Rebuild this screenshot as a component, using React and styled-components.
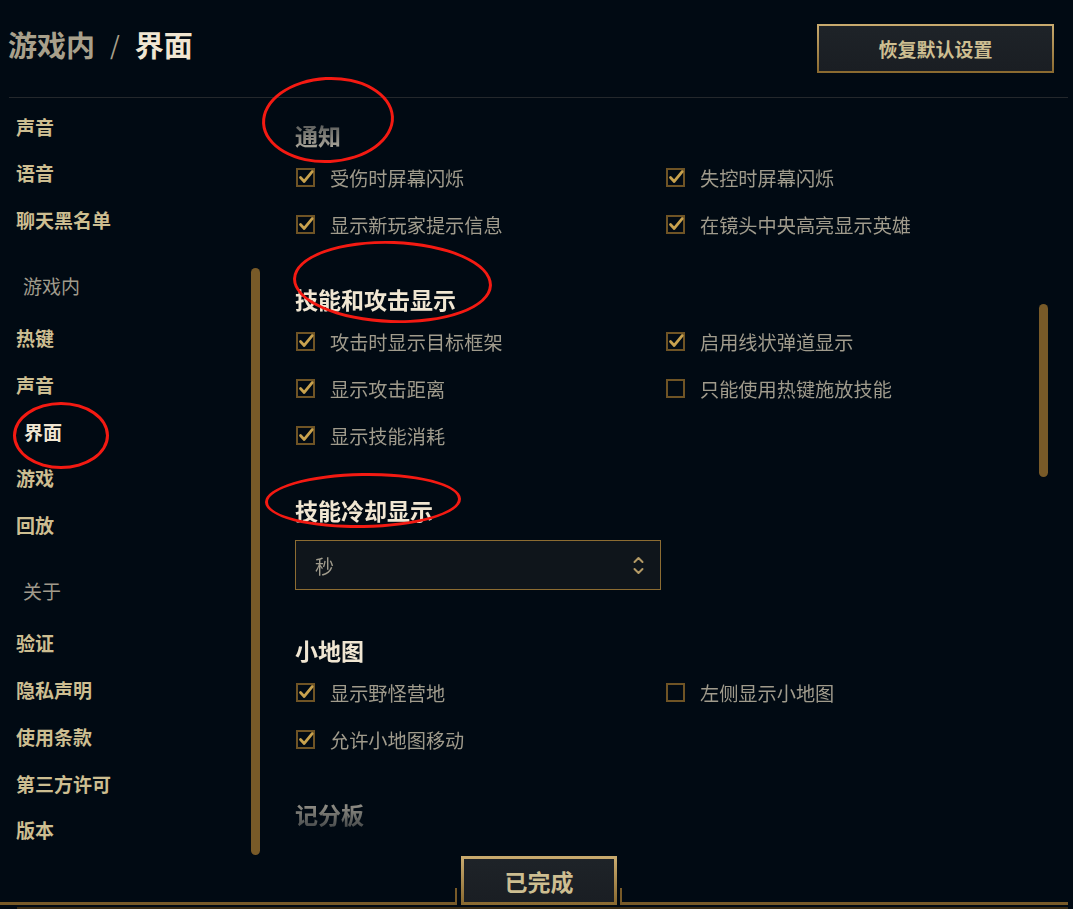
import React from "react";
import styled, { createGlobalStyle } from "styled-components";

const GlobalStyle = createGlobalStyle`
  html, body {
    margin: 0;
    padding: 0;
    background: #010a13;
  }
  body {
    font-family: "Noto Sans CJK SC", "Noto Sans", sans-serif;
  }
`;

const Page = styled.div`
  position: relative;
  display: flex;
  flex-direction: column;
  width: 1073px;
  height: 909px;
  overflow: hidden;
  background: #010a13;
`;

const Header = styled.div`
  display: flex;
  justify-content: space-between;
  align-items: center;
  height: 97px;
  padding: 0 19px 0 8px;
  box-sizing: border-box;
`;

const Title = styled.div`
  display: flex;
  align-items: center;
  padding-bottom: 10px;
  font-size: 29px;
  line-height: 36px;
  font-weight: 700;
  color: #a8a08b;
`;

const Slash = styled.span`
  margin: 0 15px;
  font-weight: 400;
  font-size: 25px;
`;

const Current = styled.span`
  color: #f0e6d2;
`;

const GoldButton = styled.button`
  display: flex;
  align-items: center;
  justify-content: center;
  width: ${({ $w }) => $w}px;
  height: 49px;
  box-sizing: border-box;
  padding: 0;
  border: ${({ $border }) => $border}px solid #c8aa6e;
  border-image: linear-gradient(to bottom, #c8aa6e, #8a6a30) 1;
  background: linear-gradient(to bottom, #1e2328, #1a1e23);
  color: #cdbe91;
  font-family: inherit;
  font-size: ${({ $size }) => $size}px;
  font-weight: 700;
  cursor: pointer;
`;

const Divider = styled.div`
  height: 1px;
  margin: 0 5px 0 9px;
  background: #24282c;
`;

const Body = styled.div`
  display: flex;
  flex: 1;
  min-height: 0;
  overflow: hidden;
`;

const NavColumn = styled.div`
  display: flex;
  width: 260px;
  flex-shrink: 0;
`;

const NavList = styled.div`
  display: flex;
  flex-direction: column;
  flex: 1;
  padding: 5.6px 0 0 16px;
`;

const NavItem = styled.div`
  height: 46.7px;
  line-height: 46.7px;
  padding-left: ${({ $active }) => ($active ? 8 : 0)}px;
  font-size: 19px;
  font-weight: 700;
  color: ${({ $active }) => ($active ? "#f0e6d2" : "#cdbe91")};
  white-space: nowrap;
`;

const NavGroup = styled.div`
  height: 46.7px;
  line-height: 46.7px;
  margin: 19px 0 6px;
  padding-left: 7px;
  font-size: 19px;
  color: #a09b8c;
`;

const Track = styled.div`
  display: flex;
  flex-direction: column;
  width: 9px;
  flex-shrink: 0;
  padding-top: ${({ $offset }) => $offset}px;
`;

const Thumb = styled.div`
  height: ${({ $length }) => $length}px;
  border-radius: 5px;
  background: #785a28;
`;

const ContentColumn = styled.div`
  display: flex;
  flex: 1;
  margin-left: 35px;
  padding-right: 25px;
  min-width: 0;
`;

const ScrollArea = styled.div`
  flex: 1;
  overflow: hidden;
  padding-top: 22px;
  -webkit-mask-image: linear-gradient(to bottom, transparent 0, #000 70px, #000 calc(100% - 80px), transparent calc(100% - 5px));
  mask-image: linear-gradient(to bottom, transparent 0, #000 70px, #000 calc(100% - 80px), transparent calc(100% - 5px));
`;

const Section = styled.section`
  padding-bottom: 36px;
`;

const Heading = styled.h3`
  margin: 0 0 4px;
  font-size: 23px;
  line-height: 30px;
  font-weight: 700;
  color: #f0e6d2;
`;

const OptionGrid = styled.div`
  display: grid;
  grid-template-columns: 370px 370px;
`;

const Option = styled.label`
  display: flex;
  align-items: center;
  gap: 15px;
  height: 47px;
  padding-left: 1px;
  font-size: 19.2px;
  color: #a09b8c;
  white-space: nowrap;
`;

const Box = styled.span`
  position: relative;
  width: 19px;
  height: 19px;
  box-sizing: border-box;
  border: 2px solid #6f5425;
  flex-shrink: 0;

  svg {
    position: absolute;
    left: -2px;
    top: -2px;
    overflow: visible;
  }
`;

const Select = styled.div`
  display: flex;
  align-items: center;
  justify-content: space-between;
  width: 366px;
  height: 50px;
  margin: 15px 0 9px;
  padding: 0 16px 0 19px;
  box-sizing: border-box;
  border: 1px solid #8c6c32;
  background: #0f151b;
  font-size: 19px;
  color: #a09b8c;
`;

const Footer = styled.div`
  display: flex;
  align-items: flex-end;
  height: 50px;
  flex-shrink: 0;
`;

const FrameLine = styled.div`
  height: 3px;
  background: #785a28;
  ${({ $fixed }) => ($fixed ? `width: ${$fixed}px;` : "flex: 1; margin-right: 5px;")}
`;

const Tick = styled.div`
  width: 2px;
  height: 17px;
  background: #785a28;
  margin: ${({ $side }) => ($side === "left" ? "0 4px 0 0" : "0 0 0 3px")};
`;

const BottomRule = styled.div`
  height: 2px;
  margin: 2px 5px 0 17px;
  background: #3a2c14;
`;

const Annotation = styled.div`
  position: absolute;
  left: ${({ $x }) => $x}px;
  top: ${({ $y }) => $y}px;
  width: ${({ $w }) => $w}px;
  height: ${({ $h }) => $h}px;
  box-sizing: border-box;
  border: 3px solid #f41a12;
  border-radius: 50%;
  transform: rotate(${({ $r }) => $r || 0}deg);
  pointer-events: none;
`;

const navItems = [
  { label: "声音" },
  { label: "语音" },
  { label: "聊天黑名单" },
  { group: "游戏内" },
  { label: "热键" },
  { label: "声音" },
  { label: "界面", active: true },
  { label: "游戏" },
  { label: "回放" },
  { group: "关于" },
  { label: "验证" },
  { label: "隐私声明" },
  { label: "使用条款" },
  { label: "第三方许可" },
  { label: "版本" },
];

const sections = [
  {
    title: "通知",
    options: [
      ["受伤时屏幕闪烁", true],
      ["失控时屏幕闪烁", true],
      ["显示新玩家提示信息", true],
      ["在镜头中央高亮显示英雄", true],
    ],
  },
  {
    title: "技能和攻击显示",
    options: [
      ["攻击时显示目标框架", true],
      ["启用线状弹道显示", true],
      ["显示攻击距离", true],
      ["只能使用热键施放技能", false],
      ["显示技能消耗", true],
    ],
  },
  { title: "技能冷却显示", select: "秒" },
  {
    title: "小地图",
    options: [
      ["显示野怪营地", true],
      ["左侧显示小地图", false],
      ["允许小地图移动", true],
    ],
  },
  { title: "记分板", options: [] },
];

function CheckBox({ checked }) {
  return (
    <Box>
      {checked && (
        <svg width="19" height="19" viewBox="0 0 19 19">
          <path d="M4.5 9.6 L8.2 13.4 L16.2 3.6" fill="none" stroke="#c8a24e" strokeWidth="2.8" strokeLinecap="round" strokeLinejoin="round" />
        </svg>
      )}
    </Box>
  );
}

function UpDown() {
  return (
    <svg width="11" height="19" viewBox="0 0 11 19">
      <path d="M1.5 6 L5.5 2 L9.5 6" fill="none" stroke="#b39a66" strokeWidth="2" strokeLinecap="round" strokeLinejoin="round" />
      <path d="M1.5 13 L5.5 17 L9.5 13" fill="none" stroke="#b39a66" strokeWidth="2" strokeLinecap="round" strokeLinejoin="round" />
    </svg>
  );
}

export default function App() {
  return (
    <Page>
      <GlobalStyle />
      <Header>
        <Title>
          游戏内
          <Slash>/</Slash>
          <Current>界面</Current>
        </Title>
        <GoldButton $w={237} $border={2} $size={19}>恢复默认设置</GoldButton>
      </Header>
      <Divider />
      <Body>
        <NavColumn>
          <NavList>
            {navItems.map((item, i) =>
              item.group ? (
                <NavGroup key={i}>{item.group}</NavGroup>
              ) : (
                <NavItem key={i} $active={item.active}>{item.label}</NavItem>
              )
            )}
          </NavList>
          <Track $offset={170}>
            <Thumb $length={587} />
          </Track>
        </NavColumn>
        <ContentColumn>
          <ScrollArea>
            {sections.map((s) => (
              <Section key={s.title}>
                <Heading>{s.title}</Heading>
                {s.select ? (
                  <Select>
                    <span>{s.select}</span>
                    <UpDown />
                  </Select>
                ) : (
                  <OptionGrid>
                    {s.options.map(([label, checked]) => (
                      <Option key={label}>
                        <CheckBox checked={checked} />
                        {label}
                      </Option>
                    ))}
                  </OptionGrid>
                )}
              </Section>
            ))}
          </ScrollArea>
          <Track $offset={206}>
            <Thumb $length={173} />
          </Track>
        </ContentColumn>
      </Body>
      <Footer>
        <FrameLine $fixed={455} />
        <Tick $side="left" />
        <GoldButton $w={156} $border={3} $size={23}>已完成</GoldButton>
        <Tick $side="right" />
        <FrameLine />
      </Footer>
      <BottomRule />

      <Annotation $x={262} $y={77} $w={132} $h={86} $r={-3} />
      <Annotation $x={293} $y={241} $w={199} $h={82} $r={2} />
      <Annotation $x={13} $y={402} $w={96} $h={67} $r={0} />
      <Annotation $x={265} $y={473} $w={196} $h={55} $r={-1} />
    </Page>
  );
}
